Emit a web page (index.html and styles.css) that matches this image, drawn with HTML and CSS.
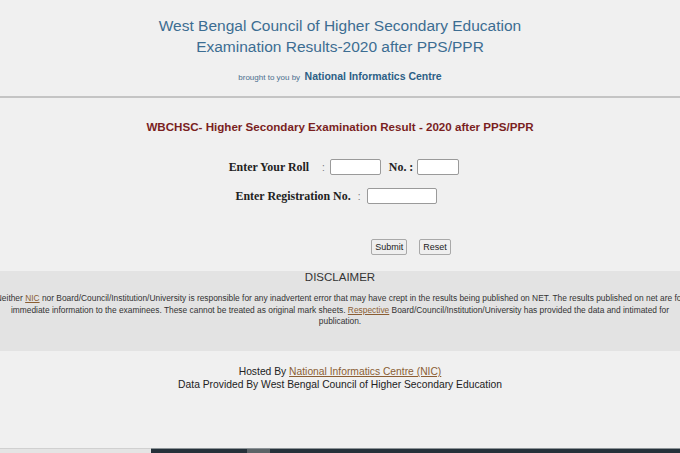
FILE: index.html
```html
<!DOCTYPE html>
<html lang="en">
<head>
<meta charset="utf-8">
<title>WBCHSE Results</title>
<link rel="stylesheet" href="styles.css">
</head>
<body>
<div class="page">
  <header class="header">
    <h1 class="title">West Bengal Council of Higher Secondary Education<br>Examination Results-2020 after PPS/PPR</h1>
    <p class="credit"><span class="credit-small">brought to you by</span> <span class="credit-nic">National Informatics Centre</span></p>
  </header>
  <main class="main">
    <h2 class="exam-title">WBCHSC- Higher Secondary Examination Result - 2020 after PPS/PPR</h2>
    <form class="form">
      <div class="row row-roll">
        <span class="label">Enter Your Roll</span>
        <span class="colon">:</span>
        <input class="field field-roll" type="text">
        <span class="label label-no">No. :</span>
        <input class="field field-no" type="text">
      </div>
      <div class="row row-reg">
        <span class="label">Enter Registration No.</span>
        <span class="colon">:</span>
        <input class="field field-reg" type="text">
      </div>
      <div class="buttons">
        <button class="btn" type="button">Submit</button>
        <button class="btn" type="button">Reset</button>
      </div>
    </form>
  </main>
  <section class="disclaimer">
    <h3 class="disc-title">DISCLAIMER</h3>
    <p class="disc-text">Neither <a href="#">NIC</a> nor Board/Council/Institution/University is responsible for any inadvertent error that may have crept in the results being published on NET. The results published on net are for<br>immediate information to the examinees. These cannot be treated as original mark sheets. <a href="#">Respective</a> Board/Council/Institution/University has provided the data and intimated for<br>publication.</p>
  </section>
  <footer class="footer">
    <p>Hosted By <a href="#">National Informatics Centre (NIC)</a></p>
    <p>Data Provided By West Bengal Council of Higher Secondary Education</p>
  </footer>
</div>
<div class="bottom-bar">
  <div class="bar-left"></div>
  <div class="bar-right"><span class="bar-patch"></span></div>
</div>
</body>
</html>
```
FILE: styles.css
```css
html, body {
  margin: 0;
  padding: 0;
  background: #f0f0f0;
  height: 100%;
  overflow: hidden;
}
body {
  font-family: "Liberation Sans", Arial, sans-serif;
  color: #222;
  display: flex;
  flex-direction: column;
  height: 453px;
}
.page {
  flex: 1;
  overflow: hidden;
}
.header {
  text-align: center;
  padding-top: 15px;
  height: 81px;
  border-bottom: 2px solid #c4c4c4;
}
.title {
  margin: 0;
  font-weight: normal;
  font-size: 15.5px;
  line-height: 21px;
  color: #3c6d92;
}
.credit {
  margin: 11px 0 0;
  line-height: 14px;
}
.credit-small {
  font-size: 8px;
  color: #4a6f8e;
}
.credit-nic {
  font-size: 10.5px;
  font-weight: bold;
  color: #2d5f86;
}
.main {
  padding-top: 21px;
}
.exam-title {
  margin: 0;
  text-align: center;
  font-size: 11.6px;
  line-height: 16px;
  color: #7a1f1f;
}
.form {
  margin-top: 24px;
  display: flex;
  flex-direction: column;
  align-items: center;
}
.row {
  display: flex;
  align-items: center;
  height: 16px;
}
.row-roll { margin-left: 8px; }
.row-reg { margin-top: 13px; margin-left: -7px; }
.label {
  font-family: "Liberation Serif", "Times New Roman", serif;
  font-weight: bold;
  font-size: 11.9px;
  color: #222;
}
.colon {
  font-size: 10px;
  color: #777;
  margin: 0 5px 0 13px;
}
.row-reg .colon { margin: 0 7px 0 7px; }
.label-no { margin: 0 4px 0 8px; }
.field {
  height: 16px;
  box-sizing: border-box;
  border: 1px solid #9a9a9a;
  border-radius: 2px;
  background: #fff;
  padding: 0;
}
.field-roll { width: 51px; }
.field-no { width: 42px; }
.field-reg { width: 70px; }
.buttons {
  margin-top: 35px;
  margin-left: 142px;
  display: flex;
  gap: 12px;
}
.btn {
  font-family: "Liberation Sans", Arial, sans-serif;
  font-size: 9px;
  height: 16px;
  padding: 0 3px;
  border: 1px solid #a9a9a9;
  border-radius: 2px;
  background: #efefef;
  color: #222;
}
.disclaimer {
  margin-top: 16px;
  background: #e3e3e3;
  height: 80px;
  box-sizing: border-box;
  padding-top: 0;
  overflow: hidden;
}
.disc-title {
  margin: 0;
  text-align: center;
  font-weight: normal;
  font-size: 11.5px;
  line-height: 12px;
  color: #333;
}
.disc-text {
  margin: 10px -12px 0;
  text-align: center;
  font-size: 8.4px;
  line-height: 11.5px;
  color: #333;
}
.disc-text a, .footer a {
  color: #8b5e34;
}
.footer {
  text-align: center;
  margin-top: 14px;
  font-size: 10.3px;
  line-height: 13px;
  color: #222;
}
.footer p { margin: 0; }
.bottom-bar {
  display: flex;
  height: 5px;
  flex: none;
}
.bar-left {
  width: 151px;
  background: #e4e4e4;
  border-top: 1px solid #d0d0d0;
}
.bar-right {
  flex: 1;
  background: #25313a;
  border-top: 1px solid #8c9397;
  position: relative;
}
.bar-patch {
  position: absolute;
  left: 96px;
  top: 0;
  width: 23px;
  height: 100%;
  background: #5c6468;
}
```
